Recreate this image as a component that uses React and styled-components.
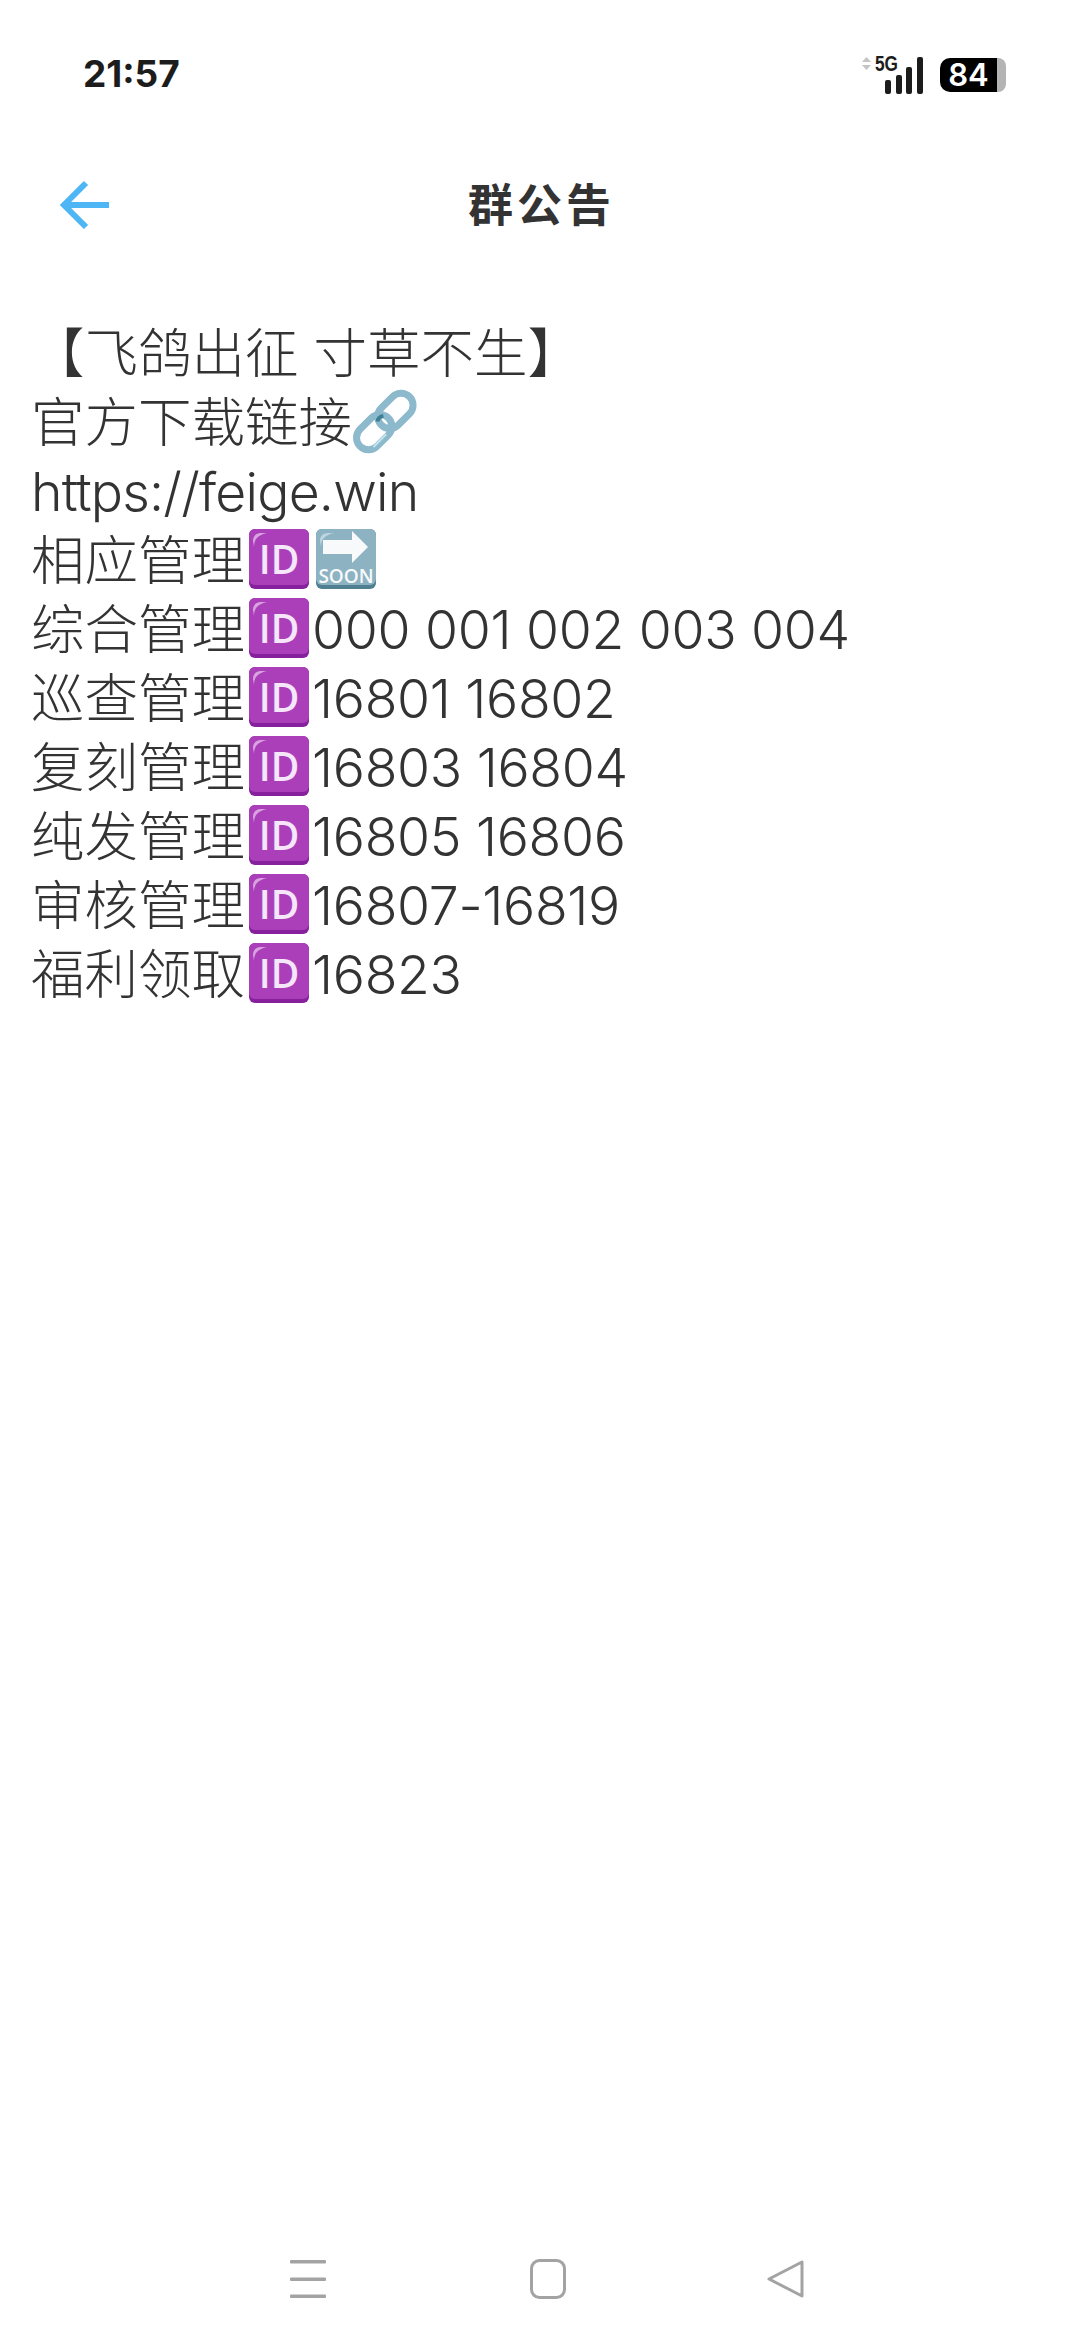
import styled, { createGlobalStyle } from "styled-components";

const GlobalStyle = createGlobalStyle`
  html, body { margin: 0; padding: 0; background: #fff; }
  body { font-family: "Inter", "Noto Sans CJK SC", sans-serif; }
`;

const Page = styled.div`
  width: 1080px;
  height: 2344px;
  display: flex;
  flex-direction: column;
  background: #fff;
  overflow: hidden;
`;

const StatusBar = styled.div`
  height: 148px;
  padding: 0 74px 0 83px;
  box-sizing: border-box;
  display: flex;
  align-items: center;
  justify-content: space-between;
`;

const Clock = styled.span`
  font-family: "Inter", sans-serif;
  font-size: 37px;
  font-weight: 700;
  color: #1c1c1c;
  margin-bottom: 2px;
`;

const StatusIcons = styled.div`
  display: flex;
  align-items: center;
  gap: 15px;
`;

const Battery = styled.div`
  display: flex;
  align-items: stretch;
  height: 34px;
  margin-top: 2px;
`;

const BatteryBody = styled.div`
  width: 57px;
  background: #000;
  color: #fff;
  border-radius: 10px 0 0 10px;
  font-family: "Inter", sans-serif;
  font-size: 31px;
  font-weight: 600;
  line-height: 34px;
  text-align: center;
`;

const BatteryCap = styled.div`
  width: 9px;
  background: #b4b4b4;
  border-radius: 0 8px 8px 0;
`;

const Header = styled.div`
  height: 112px;
  display: flex;
  align-items: center;
  justify-content: center;
  position: relative;
`;

const BackButton = styled.div`
  position: absolute;
  left: 60px;
  top: 32px;
  line-height: 0;
`;

const Title = styled.h1`
  margin: 0 0 3px 3px;
  font-family: "Noto Sans CJK SC", sans-serif;
  font-size: 45px;
  font-weight: 700;
  letter-spacing: 4px;
  color: #333;
`;

const Notice = styled.div`
  flex: 1;
  padding: 59px 31px 0;
  font-family: "Inter", "Noto Sans CJK SC", sans-serif;
  font-size: 53.5px;
  font-weight: 300;
  line-height: 69px;
  color: #333;
`;

const Line = styled.div`
  height: 69px;
  white-space: pre;
`;

const Latin = styled.span`
  letter-spacing: ${(props) => props.$tight}px;
`;

const EmojiSvg = styled.svg`
  width: 67px;
  height: 67px;
  vertical-align: -13px;
`;

const NavBar = styled.div`
  height: 124px;
  padding: 0 0 6px 290px;
  box-sizing: border-box;
  display: flex;
  align-items: center;
  gap: 204px;
`;

const BackIconSvg = styled.svg`
  width: 38px;
  height: 40px;
  margin-left: -3px;
`;

const ArrowsAndBars = () => (
  <svg width="63" height="46" viewBox="0 -5 63 46">
    <path d="M0 6 L4.5 1 L9 6Z M0 9 L9 9 L4.5 14Z" fill="#c4c4c4" />
    <text x="13" y="15" fontFamily="Liberation Sans, sans-serif" fontSize="22" fontWeight="700" fill="#1c1c1c" textLength="23" lengthAdjust="spacingAndGlyphs">5G</text>
    <rect x="23" y="24" width="6" height="14" rx="2" fill="#1c1c1c" />
    <rect x="34" y="19" width="6" height="19" rx="2" fill="#1c1c1c" />
    <rect x="44" y="11" width="6" height="27" rx="2" fill="#1c1c1c" />
    <rect x="55" y="1" width="6" height="37" rx="2" fill="#1c1c1c" />
  </svg>
);

const BackArrow = () => (
  <svg width="50" height="50" viewBox="0 0 50 50" fill="none" stroke="#4eb6f5" strokeWidth="6">
    <path d="M49 25 H4" />
    <path d="M26 3 L4 25 L26 47" />
  </svg>
);

const KeyCap = ({ face, edge, gloss, children }) => (
  <EmojiSvg viewBox="0 0 67 67">
    <rect x="4" y="3" width="60" height="60" rx="6" fill={edge} />
    <rect x="4" y="3" width="60" height="56" rx="6" fill={face} />
    <path d="M9 21 C9 13 13 9 22 7 L16 7 C11 7 8 10 8 15Z" fill={gloss} />
    {children}
  </EmojiSvg>
);

const IdEmoji = () => (
  <KeyCap face="#ab3fb9" edge="#86209d" gloss="#d9a3e0">
    <text x="34" y="48" textAnchor="middle" fontFamily="Open Sans, sans-serif" fontSize="39" fontWeight="600" fill="#f6e6f9">ID</text>
  </KeyCap>
);

const SoonEmoji = () => (
  <KeyCap face="#8db2c2" edge="#4f7f90" gloss="#bcd6e0">
    <path d="M11 14 H40 V5 L56 21 L40 37 V28 H11Z" fill="#f7f9fa" />
    <text x="34" y="57" textAnchor="middle" fontFamily="Open Sans, sans-serif" fontSize="19" fontWeight="600" fill="#f7f9fa">SOON</text>
  </KeyCap>
);

const LinkEmoji = () => (
  <EmojiSvg viewBox="0 0 67 67" fill="none">
    <g transform="rotate(-45 33.5 33.5)">
      <rect x="-2" y="21" width="40" height="24" rx="12" stroke="#8cb9cc" strokeWidth="7" />
      <rect x="28" y="21" width="40" height="24" rx="12" stroke="#8cb9cc" strokeWidth="7" />
      <path d="M28 28 C30 26 33 26 36 28" stroke="#3d7f94" strokeWidth="4" />
      <path d="M7 43 H25" stroke="#c4e3ee" strokeWidth="2" />
    </g>
  </EmojiSvg>
);

const MenuIcon = () => (
  <svg width="36" height="38" viewBox="0 0 36 38" fill="#a3a3a3">
    <rect y="0" width="36" height="3.5" rx="1" />
    <rect y="17.5" width="36" height="3.5" rx="1" />
    <rect y="34.5" width="36" height="3.5" rx="1" />
  </svg>
);

const HomeIcon = () => (
  <svg width="36" height="40" viewBox="0 0 36 40" fill="none" stroke="#a3a3a3" strokeWidth="3">
    <rect x="1.5" y="1.5" width="33" height="37" rx="8" />
  </svg>
);

const BackIcon = () => (
  <BackIconSvg viewBox="0 0 38 40" fill="none" stroke="#a3a3a3" strokeWidth="3" strokeLinejoin="round">
    <path d="M35 3 V37 L2 20Z" />
  </BackIconSvg>
);

const roles = [
  ["综合管理", "000 001 002 003 004"],
  ["巡查管理", "16801 16802"],
  ["复刻管理", "16803 16804"],
  ["纯发管理", "16805 16806"],
  ["审核管理", "16807-16819"],
  ["福利领取", "16823"],
];

const App = () => {
  return (
    <Page>
      <GlobalStyle />
      <StatusBar>
        <Clock>21:57</Clock>
        <StatusIcons>
          <ArrowsAndBars />
          <Battery>
            <BatteryBody>84</BatteryBody>
            <BatteryCap />
          </Battery>
        </StatusIcons>
      </StatusBar>
      <Header>
        <BackButton>
          <BackArrow />
        </BackButton>
        <Title>群公告</Title>
      </Header>
      <Notice>
        <Line>【飞鸽出征 寸草不生】</Line>
        <Line>官方下载链接<LinkEmoji /></Line>
        <Line><Latin $tight={-0.8}>https://feige.win</Latin></Line>
        <Line>相应管理<IdEmoji /><SoonEmoji /></Line>
        {roles.map(([name, ids]) => (
          <Line key={name}>{name}<IdEmoji /><Latin $tight={-0.3}>{ids}</Latin></Line>
        ))}
      </Notice>
      <NavBar>
        <MenuIcon />
        <HomeIcon />
        <BackIcon />
      </NavBar>
    </Page>
  );
};

export default App;
